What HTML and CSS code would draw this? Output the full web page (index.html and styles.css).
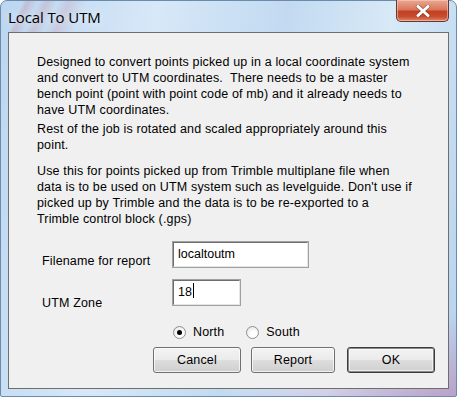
FILE: index.html
```html
<!DOCTYPE html>
<html lang="en">

<head>
  <meta charset="UTF-8">
  <title>Local To UTM</title>
  <link rel="stylesheet" href="styles.css">
</head>

<body>
  <div class="window">
    <div class="titlebar">
      <span class="title">Local To UTM</span>
      <button class="close-btn" aria-label="Close">
        <svg width="18" height="12" viewBox="0 0 18 12">
          <path d="M4 1.5 L14 10.5 M14 1.5 L4 10.5" stroke="#5a2a20" stroke-width="4.2" stroke-linecap="round" opacity="0.5" />
          <path d="M4 1.5 L14 10.5 M14 1.5 L4 10.5" stroke="#fff" stroke-width="3" stroke-linecap="round" />
        </svg>
      </button>
    </div>

    <div class="client">
      <p class="desc para-1">
        Designed to convert points picked up in a local coordinate system<br>
        and convert to UTM coordinates.&nbsp; There needs to be a master<br>
        bench point (point with point code of mb) and it already needs to<br>
        have UTM coordinates.
      </p>
      <p class="desc para-2">
        Rest of the job is rotated and scaled appropriately around this<br>
        point.
      </p>
      <p class="desc para-3">
        Use this for points picked up from Trimble multiplane file when<br>
        data is to be used on UTM system such as levelguide. Don't use if<br>
        picked up by Trimble and the data is to be re-exported to a<br>
        Trimble control block (.gps)
      </p>

      <div class="form">
        <label class="field-label label-file" for="filename">Filename for report</label>
        <input class="text-input input-file" id="filename" type="text" value="localtoutm">

        <label class="field-label label-zone" for="zone">UTM Zone</label>
        <div class="zone-box">
          <input class="text-input input-zone" id="zone" type="text" value="18">
          <span class="caret"></span>
        </div>
      </div>

      <div class="radios">
        <label class="radio"><span class="radio-dot checked"></span>North</label>
        <label class="radio"><span class="radio-dot"></span>South</label>
      </div>

      <div class="buttons">
        <button class="btn">Cancel</button>
        <button class="btn">Report</button>
        <button class="btn btn-default">OK</button>
      </div>
    </div>
  </div>
</body>

</html>
```

FILE: styles.css
```css
/* Reset margin/padding */
* {
  margin: 0;
  padding: 0;
  box-sizing: border-box;
}

html,
body {
  width: 457px;
  height: 397px;
  overflow: hidden;
  background: #ffffff;
  font-family: "Liberation Sans", Arial, sans-serif;
}

/* Vista style glass frame */
.window {
  position: relative;
  width: 457px;
  height: 397px;
  border: 1px solid #6b8bab;
  border-radius: 7px 7px 2px 2px;
  background:
    linear-gradient(115deg, transparent 0px, transparent 20px, rgba(200, 140, 160, 0.35) 24px, transparent 34px, rgba(200, 140, 160, 0.3) 42px, transparent 52px, rgba(200, 140, 160, 0.25) 62px, transparent 78px) 0 0 / 140px 32px no-repeat,
    linear-gradient(160deg, transparent 85%, rgba(190, 120, 170, 0.55) 100%),
    linear-gradient(100deg, #bcd6f0 0%, #d7e8f8 30%, #c2daf1 55%, #d8e9f7 75%, #b6d2ee 100%);
  padding: 0 7px;
  display: flex;
  flex-direction: column;
}

.titlebar {
  height: 31px;
  display: flex;
  justify-content: space-between;
  align-items: flex-start;
}

.title {
  font-family: "Open Sans", "Noto Sans", sans-serif;
  font-size: 15px;
  color: #000;
  padding-top: 6px;
  letter-spacing: -0.1px;
  text-shadow: 0 0 8px rgba(255, 255, 255, 0.9);
}

.close-btn {
  width: 53px;
  height: 22px;
  margin-top: -1px;
  margin-right: 0;
  border: 1px solid #5e3a35;
  border-top: none;
  border-radius: 0 0 5px 5px;
  background: linear-gradient(#eba894 0%, #d9785d 45%, #c23f22 55%, #c84e32 80%, #e6866a 100%);
  box-shadow: inset 0 0 0 1px rgba(255, 210, 190, 0.55);
  display: flex;
  align-items: center;
  justify-content: center;
  padding-top: 1px;
}

/* Dialog body */
.client {
  width: 441px;
  height: 357px;
  border: 1px solid #6e6e6e;
  background: #f0f0f0;
  padding: 21px 0 0 28px;
  display: flex;
  flex-direction: column;
}

.desc {
  font-size: 12.5px;
  line-height: 16px;
  color: #000;
  letter-spacing: 0.15px;
}

.para-2 {
  margin-top: 3px;
}

.para-3 {
  margin-top: 10px;
}

/* Filename + zone fields */
.form {
  display: grid;
  grid-template-columns: 130px auto;
  grid-template-rows: 27px 27px;
  row-gap: 11px;
  margin-top: 14px;
  padding-left: 5px;
}

.field-label {
  font-size: 12.5px;
  letter-spacing: 0.15px;
  align-self: end;
  color: #000;
}

.label-zone {
  transform: translateY(4px);
}

.text-input {
  height: 27px;
  border: 2px solid;
  border-color: #6e6e6e #e6e6e6 #e6e6e6 #6e6e6e;
  outline: 1px solid #a0a0a0;
  outline-offset: -1px;
  background: #fff;
  font-family: "Liberation Sans", Arial, sans-serif;
  font-size: 12.5px;
  padding: 0 4px 2px;
  color: #000;
}

.input-file {
  width: 137px;
}

.zone-box {
  position: relative;
  width: 69px;
}

.input-zone {
  width: 69px;
}

.caret {
  position: absolute;
  left: 21px;
  top: 4px;
  width: 1px;
  height: 15px;
  background: #000;
}

/* North / South */
.radios {
  display: flex;
  gap: 22px;
  margin-top: 19px;
  padding-left: 136px;
  font-size: 12.5px;
  letter-spacing: 0.15px;
}

.radio {
  display: flex;
  align-items: center;
  gap: 7px;
  height: 14px;
}

.radio-dot {
  width: 13px;
  height: 13px;
  border-radius: 50%;
  border: 1px solid #8e8f8f;
  background: radial-gradient(circle at 60% 65%, #ffffff 30%, #dcdcdc 100%);
  display: flex;
  align-items: center;
  justify-content: center;
}

.radio-dot.checked::after {
  content: "";
  width: 5px;
  height: 5px;
  border-radius: 50%;
  background: #000;
}

/* Dialog buttons */
.buttons {
  display: flex;
  margin-top: 8px;
  padding-left: 116px;
}

.btn {
  width: 88px;
  height: 26px;
  border: 1px solid #707070;
  border-radius: 3px;
  background: linear-gradient(#f3f3f3 0%, #ebebeb 48%, #dddddd 52%, #cfcfcf 100%);
  box-shadow: inset 0 0 0 1px rgba(255, 255, 255, 0.7);
  font-family: "Liberation Sans", Arial, sans-serif;
  font-size: 12.5px;
  letter-spacing: 0.15px;
  color: #000;
  margin-right: 10px;
}

.btn:nth-child(2) {
  width: 84px;
  margin-right: 12px;
}

.btn-default {
  border: 1px solid #3c3c3c;
  box-shadow: inset 0 0 0 1px #8a8a8a, inset 0 0 0 2px rgba(255, 255, 255, 0.6);
}
```
